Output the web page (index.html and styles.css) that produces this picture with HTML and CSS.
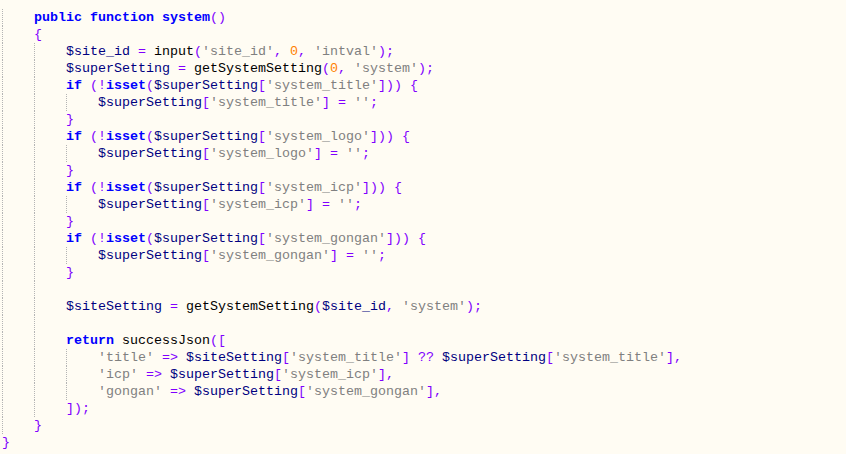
FILE: index.html
```html
<!DOCTYPE html>
<html>
<head>
<meta charset="utf-8">
<link rel="stylesheet" href="styles.css">
</head>
<body>
<div class="editor">
<div class="ln"><span class="g"></span><span class="k">public</span> <span class="k">function</span> <span class="k">system</span><span class="o">()</span></div>
<div class="ln"><span class="g"></span><span class="o">{</span></div>
<div class="ln"><span class="g"></span><span class="g"></span><span class="v">$site_id</span> <span class="o">=</span> input<span class="o">(</span><span class="s">'site_id'</span><span class="o">,</span> <span class="n">0</span><span class="o">,</span> <span class="s">'intval'</span><span class="o">);</span></div>
<div class="ln"><span class="g"></span><span class="g"></span><span class="v">$superSetting</span> <span class="o">=</span> getSystemSetting<span class="o">(</span><span class="n">0</span><span class="o">,</span> <span class="s">'system'</span><span class="o">);</span></div>
<div class="ln"><span class="g"></span><span class="g"></span><span class="k">if</span> <span class="o">(!</span><span class="k">isset</span><span class="o">(</span><span class="v">$superSetting</span><span class="o">[</span><span class="s">'system_title'</span><span class="o">]))</span> <span class="o">{</span></div>
<div class="ln"><span class="g"></span><span class="g"></span><span class="g"></span><span class="v">$superSetting</span><span class="o">[</span><span class="s">'system_title'</span><span class="o">]</span> <span class="o">=</span> <span class="s">''</span><span class="o">;</span></div>
<div class="ln"><span class="g"></span><span class="g"></span><span class="o">}</span></div>
<div class="ln"><span class="g"></span><span class="g"></span><span class="k">if</span> <span class="o">(!</span><span class="k">isset</span><span class="o">(</span><span class="v">$superSetting</span><span class="o">[</span><span class="s">'system_logo'</span><span class="o">]))</span> <span class="o">{</span></div>
<div class="ln"><span class="g"></span><span class="g"></span><span class="g"></span><span class="v">$superSetting</span><span class="o">[</span><span class="s">'system_logo'</span><span class="o">]</span> <span class="o">=</span> <span class="s">''</span><span class="o">;</span></div>
<div class="ln"><span class="g"></span><span class="g"></span><span class="o">}</span></div>
<div class="ln"><span class="g"></span><span class="g"></span><span class="k">if</span> <span class="o">(!</span><span class="k">isset</span><span class="o">(</span><span class="v">$superSetting</span><span class="o">[</span><span class="s">'system_icp'</span><span class="o">]))</span> <span class="o">{</span></div>
<div class="ln"><span class="g"></span><span class="g"></span><span class="g"></span><span class="v">$superSetting</span><span class="o">[</span><span class="s">'system_icp'</span><span class="o">]</span> <span class="o">=</span> <span class="s">''</span><span class="o">;</span></div>
<div class="ln"><span class="g"></span><span class="g"></span><span class="o">}</span></div>
<div class="ln"><span class="g"></span><span class="g"></span><span class="k">if</span> <span class="o">(!</span><span class="k">isset</span><span class="o">(</span><span class="v">$superSetting</span><span class="o">[</span><span class="s">'system_gongan'</span><span class="o">]))</span> <span class="o">{</span></div>
<div class="ln"><span class="g"></span><span class="g"></span><span class="g"></span><span class="v">$superSetting</span><span class="o">[</span><span class="s">'system_gongan'</span><span class="o">]</span> <span class="o">=</span> <span class="s">''</span><span class="o">;</span></div>
<div class="ln"><span class="g"></span><span class="g"></span><span class="o">}</span></div>
<div class="ln"><span class="g"></span><span class="g"></span></div>
<div class="ln"><span class="g"></span><span class="g"></span><span class="v">$siteSetting</span> <span class="o">=</span> getSystemSetting<span class="o">(</span><span class="v">$site_id</span><span class="o">,</span> <span class="s">'system'</span><span class="o">);</span></div>
<div class="ln"><span class="g"></span><span class="g"></span></div>
<div class="ln"><span class="g"></span><span class="g"></span><span class="k">return</span> successJson<span class="o">([</span></div>
<div class="ln"><span class="g"></span><span class="g"></span><span class="g"></span><span class="s">'title'</span> <span class="o">=&gt;</span> <span class="v">$siteSetting</span><span class="o">[</span><span class="s">'system_title'</span><span class="o">]</span> <span class="o">??</span> <span class="v">$superSetting</span><span class="o">[</span><span class="s">'system_title'</span><span class="o">],</span></div>
<div class="ln"><span class="g"></span><span class="g"></span><span class="g"></span><span class="s">'icp'</span> <span class="o">=&gt;</span> <span class="v">$superSetting</span><span class="o">[</span><span class="s">'system_icp'</span><span class="o">],</span></div>
<div class="ln"><span class="g"></span><span class="g"></span><span class="g"></span><span class="s">'gongan'</span> <span class="o">=&gt;</span> <span class="v">$superSetting</span><span class="o">[</span><span class="s">'system_gongan'</span><span class="o">],</span></div>
<div class="ln"><span class="g"></span><span class="g"></span><span class="o">]);</span></div>
<div class="ln"><span class="g"></span><span class="o">}</span></div>
<div class="ln"><span class="o">}</span></div>
</div>
</body>
</html>
```
FILE: styles.css
```css
html, body {
  margin: 0;
  padding: 0;
  background: #fffcf3;
}
.editor {
  width: 846px;
  height: 454px;
  box-sizing: border-box;
  padding: 9px 0 0 2px;
  font-family: "Liberation Mono", "Courier New", monospace;
  font-size: 13.333px;
  line-height: 17px;
  color: #000000;
  background: #fffcf3;
  overflow: hidden;
}
.ln {
  white-space: pre;
  height: 17px;
}
.g {
  display: inline-block;
  width: 32px;
  height: 17px;
  vertical-align: top;
  box-sizing: border-box;
  border-left: 1px dotted #b4b4b4;
}
.k {
  color: #0000ff;
  font-weight: bold;
}
.v {
  color: #000080;
}
.s {
  color: #808080;
}
.o {
  color: #8000ff;
}
.n {
  color: #ff8000;
}
```
